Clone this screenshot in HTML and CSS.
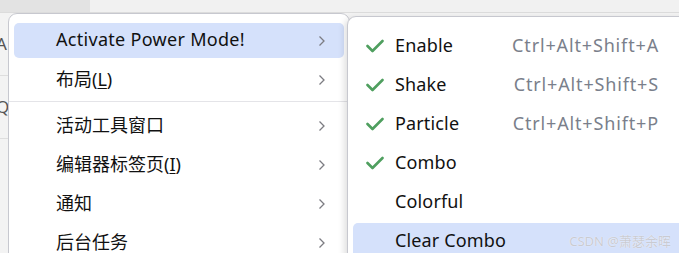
FILE: index.html
```html
<!DOCTYPE html>
<html lang="zh-CN">
<head>
  <meta charset="UTF-8" />
  <title>Activate Power Mode menu</title>
  <link rel="stylesheet" href="styles.css">
</head>
<body>
  <div class="backdrop">
    <div class="top-strip">
      <div class="tab"></div>
    </div>
    <div class="side">
      <div class="side-row">A</div>
      <div class="side-row">Q</div>
    </div>
  </div>

  <div class="menu main-menu">
    <div class="item active">
      <span class="label latin">Activate Power Mode!</span>
      <svg class="chevron" width="8" height="12" viewBox="0 0 8 12"><path d="M1.5 1.5 L6 6 L1.5 10.5" /></svg>
    </div>
    <div class="item">
      <span class="label">布局(<u>L</u>)</span>
      <svg class="chevron" width="8" height="12" viewBox="0 0 8 12"><path d="M1.5 1.5 L6 6 L1.5 10.5" /></svg>
    </div>
    <div class="separator"></div>
    <div class="item">
      <span class="label">活动工具窗口</span>
      <svg class="chevron" width="8" height="12" viewBox="0 0 8 12"><path d="M1.5 1.5 L6 6 L1.5 10.5" /></svg>
    </div>
    <div class="item">
      <span class="label">编辑器标签页(<u>I</u>)</span>
      <svg class="chevron" width="8" height="12" viewBox="0 0 8 12"><path d="M1.5 1.5 L6 6 L1.5 10.5" /></svg>
    </div>
    <div class="item">
      <span class="label">通知</span>
      <svg class="chevron" width="8" height="12" viewBox="0 0 8 12"><path d="M1.5 1.5 L6 6 L1.5 10.5" /></svg>
    </div>
    <div class="item">
      <span class="label">后台任务</span>
      <svg class="chevron" width="8" height="12" viewBox="0 0 8 12"><path d="M1.5 1.5 L6 6 L1.5 10.5" /></svg>
    </div>
  </div>

  <div class="menu sub-menu">
    <div class="item">
      <svg class="check" width="18" height="14" viewBox="0 0 18 14"><path d="M1.5 7 L6.5 12 L16.5 2" /></svg>
      <span class="label">Enable</span>
      <span class="shortcut">Ctrl+Alt+Shift+A</span>
    </div>
    <div class="item">
      <svg class="check" width="18" height="14" viewBox="0 0 18 14"><path d="M1.5 7 L6.5 12 L16.5 2" /></svg>
      <span class="label">Shake</span>
      <span class="shortcut">Ctrl+Alt+Shift+S</span>
    </div>
    <div class="item">
      <svg class="check" width="18" height="14" viewBox="0 0 18 14"><path d="M1.5 7 L6.5 12 L16.5 2" /></svg>
      <span class="label">Particle</span>
      <span class="shortcut">Ctrl+Alt+Shift+P</span>
    </div>
    <div class="item">
      <svg class="check" width="18" height="14" viewBox="0 0 18 14"><path d="M1.5 7 L6.5 12 L16.5 2" /></svg>
      <span class="label">Combo</span>
    </div>
    <div class="item">
      <span class="check-space"></span>
      <span class="label">Colorful</span>
    </div>
    <div class="item active">
      <span class="check-space"></span>
      <span class="label">Clear Combo</span>
    </div>
  </div>

  <div class="watermark">CSDN @萧瑟余晖</div>
</body>
</html>
```

FILE: styles.css
```css
body {
  margin: 0;
  width: 679px;
  height: 253px;
  overflow: hidden;
  background-color: #f3f3f3;
  font-family: "Noto Sans", "Noto Sans CJK SC", sans-serif;
  color: #111;
}

.backdrop {
  height: 253px;
}

.top-strip {
  height: 12px;
  background-color: #f1f1f1;
  border-bottom: 1px solid #dcdcdc;
}

.tab {
  width: 90px;
  height: 12px;
  background-color: #e3e3e3;
}

.side {
  width: 8px;
  overflow: hidden;
  color: #555;
  font-size: 17px;
}

.side-row {
  height: 62px;
  line-height: 62px;
  margin-left: -4px;
  border-bottom: 1px solid #dedede;
}

.menu {
  position: absolute;
  background-color: #fff;
  border: 1px solid #c7c8cf;
  border-radius: 9px;
  box-sizing: border-box;
}

.main-menu {
  left: 8px;
  top: 13px;
  width: 342px;
  height: 260px;
  padding: 9px 5px;
}

.sub-menu {
  left: 347px;
  top: 16px;
  width: 345px;
  height: 260px;
  padding: 11px 5px;
  box-shadow: -3px 2px 6px rgba(0, 0, 0, 0.12);
}

.item {
  display: flex;
  align-items: center;
  box-sizing: border-box;
  height: 35px;
  margin-bottom: 4px;
  border-radius: 5px;
  font-size: 18px;
}

.item.active {
  background-color: #d5e1fb;
}

.main-menu .item {
  padding: 0 18px 3px 42px;
}

.main-menu .chevron {
  margin-top: 3px;
}

.label {
  flex: 1;
  white-space: nowrap;
}

.label.latin {
  letter-spacing: 0.3px;
}

.label u {
  text-underline-offset: 2px;
}

.chevron path {
  fill: none;
  stroke: #7c7c82;
  stroke-width: 1.3;
}

.separator {
  height: 1px;
  margin: 0 -5px 6px;
  background-color: #e4e4e8;
}

.sub-menu .item {
  padding: 0 27px 2px 13px;
}

.sub-menu .label {
  letter-spacing: 0.15px;
}

.check,
.check-space {
  width: 18px;
  height: 14px;
  margin: 2px 11px 0 0;
  flex-shrink: 0;
}

.check path {
  fill: none;
  stroke: #4f9f5f;
  stroke-width: 2.6;
  stroke-linecap: round;
  stroke-linejoin: round;
}

.shortcut {
  color: #7a7f8b;
  white-space: nowrap;
  letter-spacing: 0.85px;
}

.watermark {
  position: absolute;
  right: 8px;
  top: 231px;
  font-size: 13px;
  color: #c9cbd2;
  text-shadow: 0 0 1px #fff;
}
```
